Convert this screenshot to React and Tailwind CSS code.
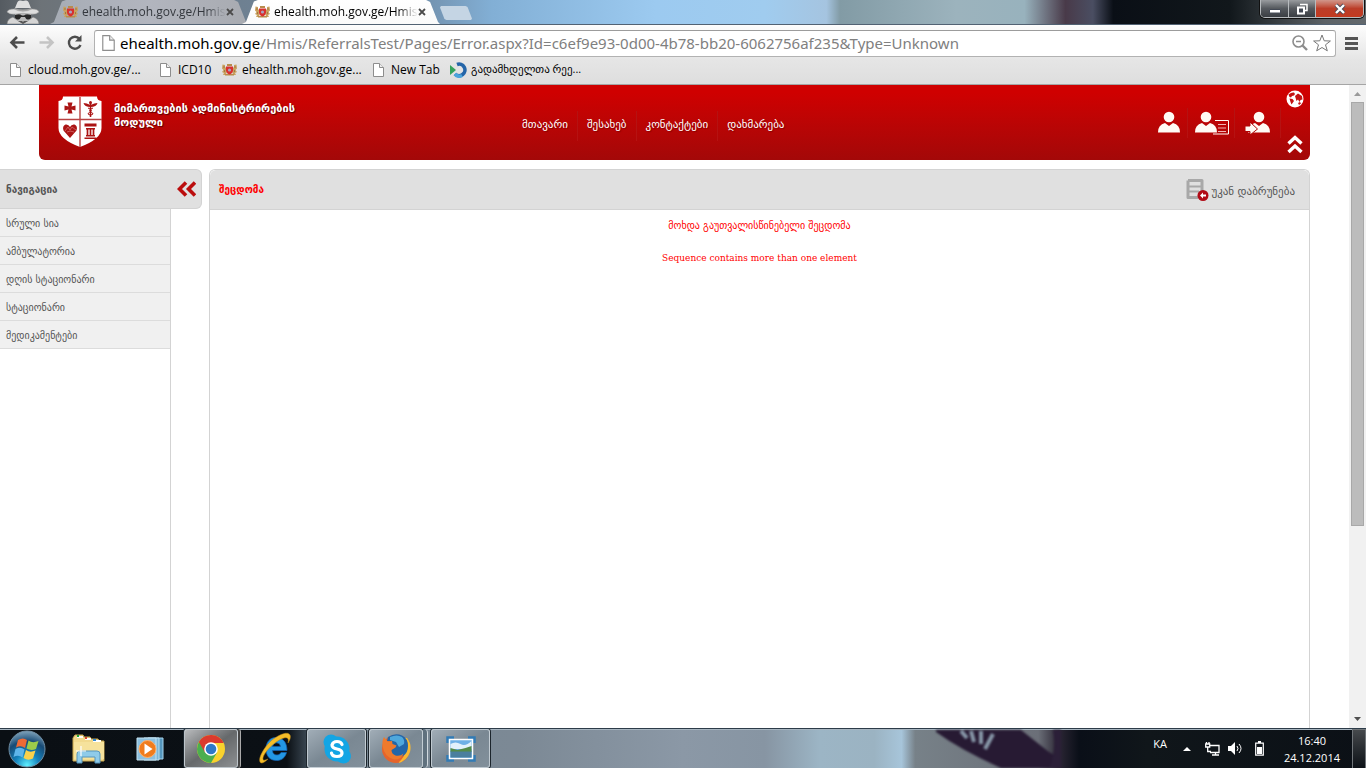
import React from "react";

const ui = "font-['Open_Sans','DejaVu_Sans',sans-serif]";

function PageIcon({ big }) {
  return (
    <svg className={big ? "h-4 w-[13px] shrink-0" : "h-[14px] w-[11px] shrink-0"} viewBox="0 0 11 14" aria-hidden="true">
      <path d="M.5.5h6l4 4v9H.5z" fill="#fff" stroke="#8d8d8d" />
      <path d="M6.500.5v4h4" fill="#eee" stroke="#8d8d8d" />
    </svg>
  );
}

function CrestIcon() {
  return (
    <svg className="h-3 w-[15px] shrink-0" viewBox="0 0 15 12" aria-hidden="true">
      <path d="M.5.5l2.500.5v2l1 1v3l1 1-1 1 1 2H1l1-2-2-1 1.500-2L0 4.500z" fill="#c9a15e" />
      <path d="M14.500.5L12 1v2l-1 1v3l-1 1 1 1-1 2h4l-1-2 2-1-1.500-2L15 4.500z" fill="#c9a15e" />
      <path d="M5 0h5v2H5zM3 10h9v1.500H3z" fill="#b98b4c" />
      <path d="M4 2.500h7v4C11 9 9 10 7.500 10.500 6 10 4 9 4 6.500z" fill="#d8312f" />
      <circle cx="7.500" cy="6" r="1.600" fill="#a9a4c0" />
      <path d="M1.500 3h1M12.500 3h1M2 7h1M12 7h1" stroke="#7d4f2a" />
    </svg>
  );
}

function Tab({ active, label }) {
  return (
    <div
      className={
        "flex h-6 w-[198px] items-center pl-[13px] pr-[14px] [clip-path:polygon(0_100%,2%_92%,6%_6%,8%_0,93%_0,95%_8%,99%_92%,100%_100%)] " +
        (active ? "z-10 bg-gradient-to-b from-white to-[#fafafa]" : "-mr-1.5 bg-gradient-to-r from-[#a6acb5] via-[#b2b5be] to-[#a8abb1] text-[#33373d]")
      }
    >
      <CrestIcon />
      <span className="ml-1 flex-1 whitespace-nowrap text-xs [mask-image:linear-gradient(to_right,#000_86%,transparent)]">{label}</span>
      <button aria-label="Close tab" className="flex h-4 w-2 shrink-0 items-center justify-center">
        <svg className="h-2 w-2" viewBox="0 0 8 8"><path d="M1 1l6 6M7 1L1 7" stroke="#4b4b4b" strokeWidth="1.800" /></svg>
      </button>
    </div>
  );
}

function Incognito() {
  return (
    <svg className="mr-[10px] h-6 w-[34px] shrink-0" viewBox="0 0 34 24" aria-hidden="true">
      <path d="M1 24q0-5 6-7l4 3 6 3 6-3 4-3q6 2 6 7z" fill="#d5d5d5" stroke="#777" strokeWidth=".6" />
      <path d="M9 13h16v6l-8 5-8-5z" fill="#b9b9b9" />
      <path d="M9 15c3-1 5-1 7 .5h2c2-1.500 4-1.500 7-.5v3c-2 2.500-5 2-6-1h-4c-1 3-4 3.500-6 1z" fill="#272727" />
      <path d="M9 8l2.500-6q1-2 3-1.500l2.500.5 2.500-.5q2-.5 3 1.500L25 8z" fill="#dedede" />
      <path d="M8.500 8q8.500 3 17 0l.5 4q-9 3-18 0z" fill="#a4a4a4" />
      <path d="M1 12q1-3 7-3 9 4.500 18 0 6 0 7 3-3 3-9 2-7-1.500-14 0-6 1-9-2z" fill="#dedede" stroke="#999" strokeWidth=".5" />
      <path d="M12 21h4l1 1 1-1h4l-5 3z" fill="#555" />
    </svg>
  );
}

function WindowControls() {
  return (
    <div className="ml-auto mr-0.5 flex h-[18px] self-start overflow-hidden rounded-b-[5px] border border-t-0 border-[#b7bbbe] shadow-[0_0_0_1px_#111]">
      <button aria-label="Minimize" className="flex w-7 items-center justify-center border-r border-[#b7bbbe] bg-gradient-to-b from-[#999c9f] via-[#55595e] via-50% to-[#3a3e43]">
        <svg className="mt-1 h-3 w-3" viewBox="0 0 12 12"><path d="M.5 4.500h11v3.500H.5z" fill="#fff" stroke="#444a55" /></svg>
      </button>
      <button aria-label="Restore" className="flex w-[27px] items-center justify-center border-r border-[#b7bbbe] bg-gradient-to-b from-[#999c9f] via-[#55595e] via-50% to-[#3a3e43]">
        <svg className="h-3 w-3" viewBox="0 0 12 12"><path d="M4 1.500h7v6H9" fill="none" stroke="#fff" strokeWidth="1.500" /><path d="M2 4.500h6v6H2z" fill="#444a55" stroke="#fff" strokeWidth="2" /></svg>
      </button>
      <button aria-label="Close" className="flex w-[47px] items-center justify-center bg-gradient-to-b from-[#d0968b] via-[#bb3d28] via-50% to-[#c23a20]">
        <svg className="h-3 w-3" viewBox="0 0 12 12"><path d="M2 2l8 8M10 2l-8 8" stroke="#494a59" strokeWidth="4" /><path d="M2 2l8 8M10 2l-8 8" stroke="#fff" strokeWidth="2.400" /></svg>
      </button>
    </div>
  );
}

const bookmarks = [
  ["page", "cloud.moh.gov.ge/...", "w-[133px]"],
  ["page", "ICD10", "w-[45px]"],
  ["crest", "ehealth.moh.gov.ge...", "w-[134px]"],
  ["page", "New Tab", "w-[60px]"],
  ["swirl", "გადამხდელთა რეე...", ""],
];

function Bookmark({ kind, label, width }) {
  return (
    <a href="#" className={"flex items-center whitespace-nowrap text-black " + (kind === "swirl" ? "gap-1 text-[11px] " : kind === "crest" ? "gap-[5px] text-xs " : "gap-[7px] text-xs ") + width}>
      {kind === "page" && <PageIcon />}
      {kind === "crest" && <CrestIcon />}
      {kind === "swirl" && (
        <svg className="h-4 w-[17px] shrink-0" viewBox="0 0 17 16" aria-hidden="true">
          <path d="M7 2.500A5.800 5.800 0 1 1 5 12" fill="none" stroke="#2465a8" strokeWidth="3.600" />
          <path d="M5 12a5.800 5.800 0 0 0 7 1.500" fill="none" stroke="#4aa3dc" strokeWidth="3.600" />
          <path d="M0 3l6 5-6 5z" fill="#35a25b" />
        </svg>
      )}
      <span>{label}</span>
    </a>
  );
}

function Browser() {
  return (
    <div className={ui}>
      <div className="flex h-[25px] items-end border-b border-[#526273] bg-[linear-gradient(to_right,#555b61_0,#6d7378_3%,#6f8ba6_30%,#82afd5_36%,#9ccaf0_48%,#a0ccef_56%,#a5c4e0_60.5%,#829ba5_61.5%,#9cb3bd_70%,#98b2bd_75%,#493a49_78%,#4a4e62_80%,#0a0f16_81.500%,#11171b_90%,#5c6266_97%,#63696d_100%)] pl-1.5">
        <Incognito />
        <Tab label="ehealth.moh.gov.ge/Hmis" />
        <Tab active label="ehealth.moh.gov.ge/Hmis" />
        <button aria-label="New tab" className="mb-1 h-[14px] w-8 bg-[#c5d5e4] [clip-path:polygon(3%_0,80%_0,86%_8%,100%_90%,97%_100%,20%_100%,14%_92%,0_10%)]" />
        <WindowControls />
      </div>
      <div className="border-b border-[#a5a5a5] bg-gradient-to-b from-[#fdfdfd] via-[#e5e5e5] via-60% to-[#dedede] pt-1">
        <div className="flex h-7 items-center px-2">
          <button aria-label="Back" className="mr-3 h-5 w-[18px]">
            <svg viewBox="0 0 18 20"><path d="M16.500 9.500H3M9 4L3.500 9.500 9 15" fill="none" stroke="#4d4d4d" strokeWidth="2.600" /></svg>
          </button>
          <button aria-label="Forward" className="mr-[10px] h-5 w-[18px]">
            <svg viewBox="0 0 18 20"><path d="M1.500 9.500h13M9 4l5.500 5.500L9 15" fill="none" stroke="#c4c4c4" strokeWidth="2.600" /></svg>
          </button>
          <button aria-label="Reload" className="mr-[10px] h-5 w-[18px]">
            <svg viewBox="0 0 18 20"><path d="M13.500 5.800A6 6 0 1 0 14.500 12" fill="none" stroke="#4d4d4d" strokeWidth="2.400" /><path d="M15.500 2v6.500H9z" fill="#4d4d4d" /></svg>
          </button>
          <div className="flex h-[27px] min-w-0 flex-1 items-center rounded-[3px] border border-[#b2b2b2] border-t-[#9c9c9c] bg-white pl-[7px] pr-1">
            <PageIcon big />
            <span className="ml-[5px] min-w-0 flex-1 overflow-hidden whitespace-nowrap font-['Noto_Sans',sans-serif] text-[15px] leading-6 text-[#808080]">
              <span className="text-black">ehealth.moh.gov.ge</span>/Hmis/ReferralsTest/Pages/Error.aspx?Id=c6ef9e93-0d00-4b78-bb20-6062756af235&amp;Type=Unknown
            </span>
            <button aria-label="Zoom" className="mr-[5px] h-4 w-4">
              <svg viewBox="0 0 16 16"><circle cx="6.500" cy="6.500" r="5.500" fill="none" stroke="#8d8d8d" strokeWidth="1.600" /><path d="M4 6.500h5" stroke="#8d8d8d" strokeWidth="1.500" /><path d="M10.500 10.500l4.500 4.500" stroke="#8d8d8d" strokeWidth="2.400" /></svg>
            </button>
            <button aria-label="Bookmark this page" className="h-[18px] w-[18px]">
              <svg viewBox="0 0 18 18"><path d="M9 1l2.200 5.800 6.200.2-4.900 3.800 1.800 6L9 13.500 3.700 16.800l1.800-6L.6 7l6.200-.2z" fill="#fff" stroke="#777" strokeLinejoin="round" /></svg>
            </button>
          </div>
          <button aria-label="Menu" className="ml-[9px] h-[13px] w-[13px]">
            <svg viewBox="0 0 13 13"><path d="M0 1.500h13M0 6.500h13M0 11.500h13" stroke="#555" strokeWidth="3" /></svg>
          </button>
        </div>
        <nav aria-label="Bookmarks" className="flex h-[27px] items-center gap-[17px] pb-0.5 pl-[10px]">
          {bookmarks.map(([k, l, w]) => <Bookmark key={l} kind={k} label={l} width={w} />)}
        </nav>
      </div>
    </div>
  );
}

function Shield() {
  return (
    <svg className="h-[52px] w-[46px] shrink-0" viewBox="0 0 46 52" aria-hidden="true">
      <path d="M6 .5h34q0 4 4.500 4.500v27q0 11-21.500 19Q1.500 43 1.500 32V5Q6 4.500 6 .5z" fill="#fff" />
      <path d="M23 1v50M1 23.500h44" stroke="#b94343" strokeWidth="1.400" />
      <path d="M10.500 6.500h5l-1 4 4-1v5l-4-1 1 4h-5l1-4-4 1v-5l4 1z" fill="#ab1414" />
      <path d="M33.500 7v14" stroke="#ab1414" strokeWidth="1.500" />
      <circle cx="33.500" cy="6.500" r="1.500" fill="#ab1414" />
      <path d="M26.500 7q3 0 7 2 4-2 7-2-1 4-7 4-6 0-7-4z" fill="#ab1414" />
      <path d="M31 12q5 2 2.500 3.500T31 18q4 1 2.500 3M36 12q-5 2-2.500 3.500T36 18q-4 1-2.500 3" fill="none" stroke="#ab1414" />
      <path d="M13 42l-6.500-7.500Q5 30 8.500 28.500q3-.5 4.500 2.500 1.500-3 4.500-2.500Q21 30 19.500 34.500z" fill="#ab1414" />
      <path d="M8 35l3-4 2 3 2-3 4 3M10 36l3-1 4 1" stroke="#d77" strokeWidth=".7" fill="none" />
      <path d="M27.500 27.500h12v3h-12zM29 32h9v1.500h-9zM29 39h9v1.500h-9zM27.500 41.500h12V43h-12z" fill="#ab1414" />
      <path d="M30.500 33v6M33.500 33v6M36.500 33v6" stroke="#ab1414" strokeWidth="1.700" />
    </svg>
  );
}

function Person({ extra, label }) {
  return (
    <a href="#" aria-label={label} className={"flex h-[30px] items-center border-r border-[#b51212] " + (extra === "arrow" ? "px-[10px]" : extra === "card" ? "pl-[7px] pr-[5px]" : "pr-[7px]")}>
      <svg className={extra === "card" ? "h-6 w-[34px]" : extra === "arrow" ? "h-6 w-[25px]" : "h-6 w-[22px]"} viewBox={extra === "card" ? "0 0 34 24" : extra === "arrow" ? "-3 0 25 24" : "0 0 22 24"}>
        <circle cx="11" cy="6" r="5.300" fill="#fffaf4" />
        <path d="M0 21.500q0-8 7-9.500l4 3 4-3q7 1.500 7 9.500z" fill="#fffaf4" />
        {extra === "card" && (
          <>
            <path d="M20 9.500h13.500v13.500H18" fill="none" stroke="#fffaf4" />
            <path d="M23 13.500h8M23 17h8M23 20.500h8" stroke="#f0b5b5" strokeWidth="1.200" />
          </>
        )}
        {extra === "arrow" && <path d="M-3 15h5v-4l7.500 7-7.500 6v-3.500h-5z" fill="#fffaf4" stroke="#b00606" strokeWidth="1" />}
      </svg>
    </a>
  );
}

const links = ["მთავარი", "შესახებ", "კონტაქტები", "დახმარება"];
const menu = ["სრული სია", "ამბულატორია", "დღის სტაციონარი", "სტაციონარი", "მედიკამენტები"];

function SiteHeader() {
  return (
    <header className="mx-[39px] grid h-[75px] shrink-0 grid-cols-[37.3%_auto_1fr] rounded-b-md bg-gradient-to-b from-[#cf0000] from-10% to-[#a30808] text-white">
      <div className="flex gap-[11px] pl-[18px] pt-[11px]">
        <Shield />
        <h1 className="w-[200px] pt-1.5 text-[11px] font-bold leading-[14px] [text-shadow:1px_1px_1px_#5c0000]">მიმართვების ადმინისტრირების მოდული</h1>
      </div>
      <nav className="flex items-center pt-1.5 text-[11px] [text-shadow:1px_1px_1px_#800]">
        {links.map((l, i) => (
          <a key={l} href="#" className={"flex h-[30px] items-center px-[9px] " + (i < links.length - 1 ? "border-r border-[#b51212]" : "")}>{l}</a>
        ))}
      </nav>
      <div className="flex justify-end pr-[6px]">
        <div className="mr-[5px] flex items-center">
          <Person label="მომხმარებელი" />
          <Person extra="card" label="პროფილი" />
          <Person extra="arrow" label="გასვლა" />
        </div>
        <div className="flex flex-col items-center justify-between pb-1.5 pt-[5px]">
          <button aria-label="ენა">
            <svg className="h-[18px] w-[18px]" viewBox="0 0 18 18"><circle cx="9" cy="9" r="8.500" fill="#fff" /><path d="M2.500 4.500q3-2.500 5.500-2l1 1.500-1 1.500-2 .5-1 1.500-1.500-.5zM9 6l3-2.500L16 6l.5 3.500-2 .5-1 2-1.500-2.500-1.500 1.500zM3.500 8.500l3 .5 1.500 2-2.500 3.500-1-2.500zM12 13l2-1 1 1.500-2 1.500z" fill="#c51212" /></svg>
          </button>
          <button aria-label="აკეცვა">
            <svg className="h-5 w-4" viewBox="0 0 16 20"><path d="M1.500 9.500L8 3.500l6.500 6M1.500 18L8 12l6.500 6" fill="none" stroke="#fff" strokeWidth="3.400" /></svg>
          </button>
        </div>
      </div>
    </header>
  );
}

function Site() {
  return (
    <div className="flex min-h-0 flex-1 bg-white font-['DejaVu_Sans',sans-serif] text-[#555]">
      <div className="flex min-w-0 flex-1 flex-col">
        <SiteHeader />
        <div className="mt-[9px] flex flex-1 gap-[7px]">
          <aside className="flex w-[202px] shrink-0 flex-col">
            <div className="flex h-10 items-center justify-between rounded-r-md border border-l-0 border-[#d3d3d3] bg-[#e0e0e0] pl-1.5 pr-[5px]">
              <h2 className="text-[10px] font-bold">ნავიგაცია</h2>
              <button aria-label="პანელის დამალვა">
                <svg className="h-4 w-[19px]" viewBox="0 0 19 16"><path d="M9 1.500L2.500 8 9 14.500M18 1.500L11.500 8l6.500 6.500" fill="none" stroke="#bb0d0d" strokeWidth="3.600" /></svg>
              </button>
            </div>
            <nav className="w-[171px] flex-1 border-r border-[#d3d3d3]">
              {menu.map((m) => (
                <a key={m} href="#" className="flex h-7 items-center border-b border-[#dcdcdc] bg-[#f0f0f0] pl-1.5 pt-px text-[10px]">{m}</a>
              ))}
            </nav>
          </aside>
          <main className="mr-[39px] flex flex-1 flex-col rounded-t-md border border-b-0 border-[#d3d3d3]">
            <div className="flex h-10 items-center justify-between rounded-t-md border-b border-[#d3d3d3] bg-[#e0e0e0] pl-[9px] pr-[14px]">
              <h2 className="text-[10px] font-bold text-[#f00]">შეცდომა</h2>
              <a href="#" className="flex items-center gap-0.5 text-[11px]">
                <svg className="h-[22px] w-[23px]" viewBox="0 0 23 22" aria-hidden="true">
                  <path d="M2 1.500h14V13M2 1.500v17h10" fill="none" stroke="#a8a8a8" strokeWidth="3" strokeLinejoin="round" />
                  <path d="M3 7.500h13M3 12.500h10" stroke="#a8a8a8" strokeWidth="2" />
                  <circle cx="17" cy="16.500" r="5.500" fill="#b10b16" />
                  <path d="M14 16.500l3-3v2h3v2h-3v2z" fill="#fff" />
                </svg>
                <span className="pt-1.5">უკან დაბრუნება</span>
              </a>
            </div>
            <div className="flex flex-col gap-4 pt-2 text-center text-[#f00]">
              <p className="text-[10px] leading-4">მოხდა გაუთვალისწინებელი შეცდომა</p>
              <p className="font-['DejaVu_Serif',serif] text-[9px] leading-4">Sequence contains more than one element</p>
            </div>
          </main>
        </div>
      </div>
      <div className="flex w-[17px] flex-col items-center bg-[#f1f1f1]">
        <svg className="h-[17px] w-[17px]" viewBox="0 0 17 17"><path d="M5 11l3.500-4 3.500 4z" fill="#999" /></svg>
        <div className="h-[66%] w-[13px] border border-[#a8a8a8] bg-[#bcbcbc]" />
        <svg className="mt-auto h-[17px] w-[17px]" viewBox="0 0 17 17"><path d="M5 6l3.500 4L12 6z" fill="#505050" /></svg>
      </div>
    </div>
  );
}

function WindowsOrb() {
  return (
    <svg className="h-[38px] w-[38px]" viewBox="0 0 38 38">
      <defs>
        <radialGradient id="orb" cx=".5" cy=".95" r=".95"><stop offset="0" stopColor="#5ff0ff" /><stop offset=".35" stopColor="#1583bd" /><stop offset=".7" stopColor="#174a75" /><stop offset="1" stopColor="#7fa3bb" /></radialGradient>
      </defs>
      <circle cx="19" cy="19" r="18" fill="url(#orb)" stroke="#6f8ea4" />
      <path d="M10 10q5-3 9 0l-2 8q-4-3-9-.5z" fill="#ee6a35" />
      <path d="M20.500 10.500q4 3 10 .5l-2.500 8q-5 2-9.500-.5z" fill="#9bcb4a" />
      <path d="M7.500 19q5-2.500 9 .5l-2 8q-4-3-9-.5z" fill="#5fb5ea" />
      <path d="M18 20q4 3 9.500.5L25 28.500q-5 2.500-9.500-.5z" fill="#fbd14b" />
    </svg>
  );
}

function ExplorerIcon() {
  return (
    <svg className="h-[30px] w-[34px]" viewBox="0 0 34 30">
      <path d="M1 4l2-3h8l1 2h6l1 2h7l1 2h5v20H1z" fill="#f2da8e" stroke="#c9a850" />
      <path d="M5 2h6v2H5zM13 4h6v2h-6zM21 6h8v2h-8z" fill="#fff" />
      <path d="M5 1h2v2H5z" fill="#1da53a" /><path d="M13 3h2v2h-2z" fill="#d74332" /><path d="M21 5h3v2h-3z" fill="#3489d0" />
      <path d="M2 8h30v17H2z" fill="#f6e29c" />
      <path d="M5 29V20q0-3 3-3h17q3 0 3 3v9h-5v-6H10v6z" fill="#8fcbe9" stroke="#5796bd" />
      <path d="M9 12v10M4 17h10" stroke="#fff" strokeWidth="1.200" />
    </svg>
  );
}

function PlayerIcon() {
  return (
    <svg className="h-[28px] w-[28px]" viewBox="0 0 28 28">
      <path d="M12 3h15v21H12z" fill="#5596bd" stroke="#a7d3ec" /><path d="M8 3h15v22H8z" fill="#7bb6d8" stroke="#bde1f2" />
      <path d="M1 3h19v22H1z" fill="#8dc0df" stroke="#c4e3f2" />
      <circle cx="11.500" cy="14" r="8.500" fill="#f07c1d" stroke="#ffb16b" /><path d="M8.500 8.500l8 5.500-8 5.500z" fill="#fff" />
    </svg>
  );
}

function ChromeIcon() {
  return (
    <svg className="h-[30px] w-[30px]" viewBox="0 0 30 30">
      <circle cx="15" cy="15" r="14" fill="#f9d22d" />
      <path d="M15 15L2.900 8A14 14 0 0 0 15 29l6-10.500z" fill="#4bae4f" />
      <path d="M2.900 8A14 14 0 0 1 27.600 9H15l-6 9.500z" fill="#db3a2d" />
      <circle cx="15" cy="15" r="6.800" fill="#fff" /><circle cx="15" cy="15" r="5.300" fill="#2e78c7" />
    </svg>
  );
}

function IeIcon() {
  return (
    <svg className="h-[34px] w-[34px]" viewBox="0 0 34 34">
      <path d="M18 5.500c7 0 11 5 11 13H14.500c0 3 2 4.500 4.500 4.500 2 0 3-1 4-2.500h5.500C27 26 23.500 28.500 18.500 28.500 12 28.500 8 24 8 17S12 5.500 18 5.500zM14.500 14.500h8q-.5-3.700-4-3.700t-4 3.700z" fill="#2397e4" stroke="#1261b5" strokeWidth=".7" />
      <path d="M10 27c-4 4-7 5-8 3C0 26 6 15 14 8 22 2 30-1 32 3c1 2 0 5-2 8 1-4 0-6-4-5C18 8 6 20 5 26c-.5 3 2 2.500 5 1z" fill="#f5bd28" stroke="#b98416" strokeWidth=".5" />
    </svg>
  );
}

function SkypeIcon() {
  return (
    <svg className="h-[30px] w-[30px]" viewBox="0 0 30 30">
      <circle cx="9" cy="8" r="7.500" fill="#13a5e4" /><circle cx="21.500" cy="22" r="7.500" fill="#13a5e4" /><circle cx="15" cy="15" r="12.500" fill="#13a5e4" />
      <path d="M20 10.500Q19 7.500 15 7.500t-5 3.500q0 3 5 4t5 4q0 3.500-5 3.500t-5.500-3.500" fill="none" stroke="#fff" strokeWidth="3.200" strokeLinecap="round" />
    </svg>
  );
}

function FirefoxIcon() {
  return (
    <svg className="h-[30px] w-[30px]" viewBox="0 0 30 30">
      <circle cx="15" cy="15" r="14" fill="#e6642b" />
      <path d="M26 4q5 6 3 14-3 9-12 11 7-6 8-13 0-7-3-12z" fill="#f8b932" />
      <path d="M7 3q7-4.500 14-1.500 6 3 6 10.500 0 7-5 10-5 2-9 0-4-2-4-6l4-2 1-2-4-1.500-1-3-3-.5z" fill="#2366a8" />
      <path d="M9 3q7-3 12 0 3 3 2 7l-5 3-3-5-6-2z" fill="#4fa8dc" />
      <path d="M1.500 12Q1 6 3 3l3.500 4.500L11 7l.5 3 4 1.500-1 2-4 2.500q0 4 4 5.500 5 1 8-2-2 6-9 6-10-2-12-13.500z" fill="#ee7a2d" />
    </svg>
  );
}

function PictureIcon() {
  return (
    <svg className="h-[26px] w-[30px]" viewBox="0 0 30 26">
      <path d="M2.500 7V2.500H8M22 2.500h5.500V7M2.500 19v4.500H8M22 23.500h5.500V19" fill="none" stroke="#327bb5" strokeWidth="4.500" />
      <path d="M3.500 3.500h23v19h-23z" fill="#6fb0e6" stroke="#fff" strokeWidth="1.500" />
      <path d="M4.500 8q5-3 10 0t11-3v8h-21z" fill="#e3f1fb" /><path d="M4.500 12l7 2 8-2 6-2v6h-21z" fill="#548a48" /><path d="M4.500 15.500h21v6h-21z" fill="#4b7f9e" />
    </svg>
  );
}

function TaskButton({ label, children, className = "", framed, light }) {
  return (
    <button
      aria-label={label}
      className={
        "flex h-[39px] items-center justify-center " + className + " " +
        (framed ? "rounded-[3px] border border-[#d0d8de]/80 shadow-[0_0_0_1px_#1c252c] bg-gradient-to-br " + (light ? "from-[#b9bbbd] via-[#66696b] to-[#8d9092]" : "from-[#a1adb7] via-[#7a8893] to-[#82909b]") : "")
      }
    >
      {children}
    </button>
  );
}

function Taskbar() {
  return (
    <footer className={"flex h-10 shrink-0 overflow-hidden border-t border-[#2d3c49] bg-[linear-gradient(to_right,#0a0f14_0,#0b1015_21%,#3b4853_22.500%,#788894_24%,#7c8995_38%,#8b98a6_50%,#8795a3_56%,#9cb5c5_60%,#9bb3c2_64%,#a7c5da_66%,#778188_67%,#6b6f78_76%,#2b2634_77.500%,#0a0f18_79%,#10161a_84%,#0b1016_100%)] text-white shadow-[inset_0_1px_0_#a7b5c0] " + ui}>
      <TaskButton label="Start" className="ml-2"><WindowsOrb /></TaskButton>
      <TaskButton label="File Explorer" className="ml-[26px]"><ExplorerIcon /></TaskButton>
      <TaskButton label="Media Player" className="ml-[30px]"><PlayerIcon /></TaskButton>
      <TaskButton label="Chrome" framed light className="ml-5 w-[54px]"><ChromeIcon /></TaskButton>
      <span className="mr-4 w-[3px] rounded-r border-r border-[#aaa] bg-[#444]" />
      <TaskButton label="Internet Explorer" className="w-[35px]"><IeIcon /></TaskButton>
      <TaskButton label="Skype" framed className="ml-[15px] w-[59px]"><SkypeIcon /></TaskButton>
      <TaskButton label="Firefox" framed className="ml-[3px] w-[54px]"><FirefoxIcon /></TaskButton>
      <span className="w-[5px] rounded-r border-r border-[#d0d8de] bg-[#60717e]" />
      <TaskButton label="Pictures" framed className="ml-[3px] w-[59px]"><PictureIcon /></TaskButton>
      <div className="ml-auto flex items-center text-[11px]">
        <svg className="mr-[92px] h-[38px] w-[130px] blur-[1px]" viewBox="0 0 130 38" aria-hidden="true">
          <path d="M5 2Q30 20 70 38h50q8-12-2-16L90 0H5z" fill="#271a33" />
          <path d="M122 0h8v38h-12q8-18 4-38z" fill="#2b1f38" />
          <path d="M30 1l6 7M40 1l3 11M50 1v13M62 4l-8 15" stroke="#8797a8" strokeWidth="4" />
        </svg>
        <span className="mb-2 mr-4">KA</span>
        <svg className="mr-[14px] h-2 w-2" viewBox="0 0 8 8"><path d="M0 6l4-4 4 4z" fill="#fff" /></svg>
        <svg className="mr-2 h-4 w-[15px]" viewBox="0 0 15 16"><path d="M5 4.500h9v7H5M7 14h7M10.500 11v3M.7 3h4v3h-4zM2.700 6v4.500H6M1.500 1v2M4 1v2" fill="none" stroke="#fff" strokeWidth="1.300" /></svg>
        <svg className="mr-3 h-[15px] w-[15px]" viewBox="0 0 15 15"><path d="M0 5h3l4-4v13l-4-4H0z" fill="#fff" /><path d="M9 5q2 2.500 0 5M11 3q4 4.500 0 9" fill="none" stroke="#fff" /></svg>
        <svg className="mr-5 h-[15px] w-[9px]" viewBox="0 0 9 15"><path d="M3 0h3v2H3z" fill="#fff" /><path d="M.7 2.200h7.600v12H.7z" fill="none" stroke="#fff" strokeWidth="1.200" /><path d="M2 6h5v7H2z" fill="#fff" /></svg>
        <time className="mr-3 text-center leading-[17px]">16:40<br />24.12.2014</time>
        <button aria-label="Show desktop" className="h-10 w-[14px] border border-[#707579] bg-gradient-to-b from-[#46494c] to-[#0d1217]" />
      </div>
    </footer>
  );
}

export default function App() {
  return (
    <div className="flex h-screen flex-col overflow-hidden">
      <Browser />
      <Site />
      <Taskbar />
    </div>
  );
}
